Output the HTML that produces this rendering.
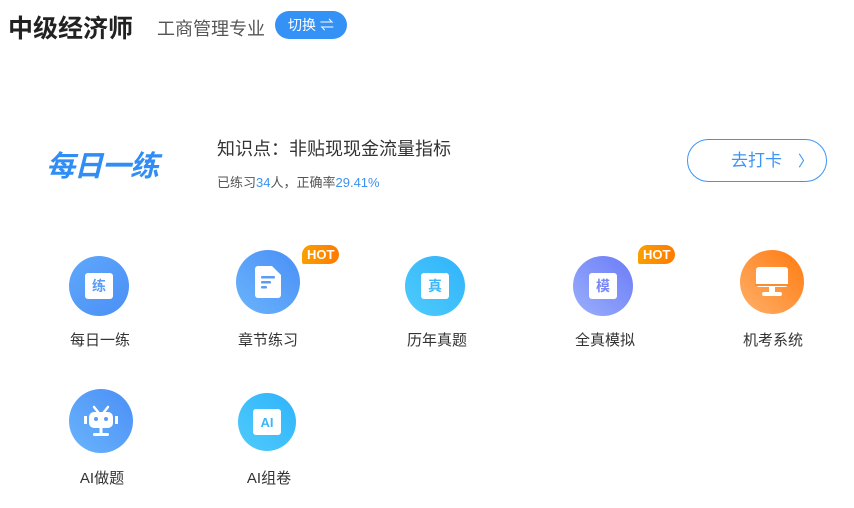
<!DOCTYPE html>
<html><head><meta charset="utf-8"><style>
body{margin:0;width:854px;height:508px;background:#fff;font-family:"Liberation Sans","Noto Sans CJK SC",sans-serif;position:relative;overflow:hidden;color:#333}
.a{position:absolute;white-space:nowrap}
.c{position:absolute;border-radius:50%;display:flex;align-items:center;justify-content:center}
.lbl{position:absolute;font-size:15px;color:#333;width:120px;text-align:center;top:329px}
.hot{position:absolute;background:linear-gradient(90deg,#f9a000,#ff7a00);color:#fff;font-weight:bold;font-size:13px;border-radius:10px 10px 10px 2px;padding:0 5px;height:19px;line-height:19px}
.doc{width:28px;height:26px;background:#fff;border-radius:3px;display:flex;align-items:center;justify-content:center;font-weight:bold;font-size:14px}
</style></head><body>
<div class="a" style="left:8px;top:9px;font-size:25px;font-weight:bold;color:#222">中级经济师</div>
<div class="a" style="left:157px;top:15px;font-size:18px;color:#555">工商管理专业</div>
<div class="a" style="left:275px;top:11px;width:72px;height:28px;border-radius:14px;background:#3492f7;color:#fff;font-size:14px;line-height:28px;text-align:center">切换 ⇌</div>

<div class="a" style="left:46px;top:143px;font-size:29px;font-weight:bold;font-style:italic;color:#2f8df5;letter-spacing:-1px">每日一练</div>
<div class="a" style="left:217px;top:135px;font-size:18px;color:#333">知识点：非贴现现金流量指标</div>
<div class="a" style="left:217px;top:172px;font-size:13px;color:#555">已练习<span style="color:#3c92f0">34</span>人，正确率<span style="color:#3c92f0">29.41%</span></div>
<div class="a" style="left:687px;top:139px;width:140px;height:43px;border:1px solid #3c95f5;border-radius:22px;box-sizing:border-box;color:#3c95f5;font-size:17px;line-height:41px;padding-left:43px">去打卡<span style="margin-left:16px;font-size:15px">〉</span></div>

<div class="c" style="left:69px;top:256px;width:60px;height:60px;background:linear-gradient(135deg,#5ea8fb,#4b8ff6)"><div class="doc" style="color:#5a9cf8">练</div></div>
<div class="c" style="left:236px;top:250px;width:64px;height:64px;background:linear-gradient(225deg,#4a8ff6,#6ab4fc)"><svg width="26" height="32" viewBox="0 0 26 32"><path d="M3 0h14l9 9v20a3 3 0 0 1-3 3H3a3 3 0 0 1-3-3V3a3 3 0 0 1 3-3z" fill="#fff"/><rect x="6" y="10" width="14" height="2.5" rx="1" fill="#5a9cf8"/><rect x="6" y="15" width="10" height="2.5" rx="1" fill="#5a9cf8"/><rect x="6" y="20" width="6" height="2.5" rx="1" fill="#5a9cf8"/></svg></div>
<div class="hot" style="left:302px;top:245px">HOT</div>
<div class="c" style="left:405px;top:256px;width:60px;height:60px;background:linear-gradient(225deg,#2fb3fb,#4fcbfb)"><div class="doc" style="color:#3bb8fa">真</div></div>
<div class="c" style="left:573px;top:256px;width:60px;height:60px;background:linear-gradient(225deg,#6b7cf7,#9aaffc)"><div class="doc" style="color:#7a88f5">模</div></div>
<div class="hot" style="left:638px;top:245px">HOT</div>
<div class="c" style="left:740px;top:250px;width:64px;height:64px;background:linear-gradient(225deg,#ff7a10,#ffb06a)"><svg width="34" height="30" viewBox="0 0 34 30"><rect x="1" y="0" width="32" height="20" rx="3" fill="#fff"/><rect x="0" y="17" width="34" height="2" fill="#ff8a2a"/><rect x="14" y="20" width="6" height="5" fill="#fff"/><rect x="7" y="25" width="20" height="4" rx="2" fill="#fff"/></svg></div>

<div class="lbl" style="left:40px">每日一练</div>
<div class="lbl" style="left:208px">章节练习</div>
<div class="lbl" style="left:377px">历年真题</div>
<div class="lbl" style="left:545px">全真模拟</div>
<div class="lbl" style="left:713px">机考系统</div>

<div class="c" style="left:69px;top:389px;width:64px;height:64px;background:linear-gradient(225deg,#4a8ff6,#6ab4fc)"><svg width="34" height="32" viewBox="0 0 34 32"><path d="M10 2l4 5M24 2l-4 5" stroke="#fff" stroke-width="2.5" stroke-linecap="round"/><rect x="5" y="7" width="24" height="16" rx="5" fill="#fff"/><rect x="0" y="11" width="3" height="8" fill="#fff"/><rect x="31" y="11" width="3" height="8" fill="#fff"/><circle cx="12" cy="14" r="2" fill="#5a9cf8"/><circle cx="22" cy="14" r="2" fill="#5a9cf8"/><rect x="15.5" y="23" width="3" height="5" fill="#fff"/><rect x="9" y="28" width="16" height="3" rx="1.5" fill="#fff"/></svg></div>
<div class="c" style="left:238px;top:393px;width:58px;height:58px;background:linear-gradient(225deg,#2fb3fb,#4fcbfb)"><div class="doc" style="color:#3bb8fa;font-size:13px">AI</div></div>
<div class="lbl" style="left:42px;top:467px">AI做题</div>
<div class="lbl" style="left:209px;top:467px">AI组卷</div>
</body></html>
